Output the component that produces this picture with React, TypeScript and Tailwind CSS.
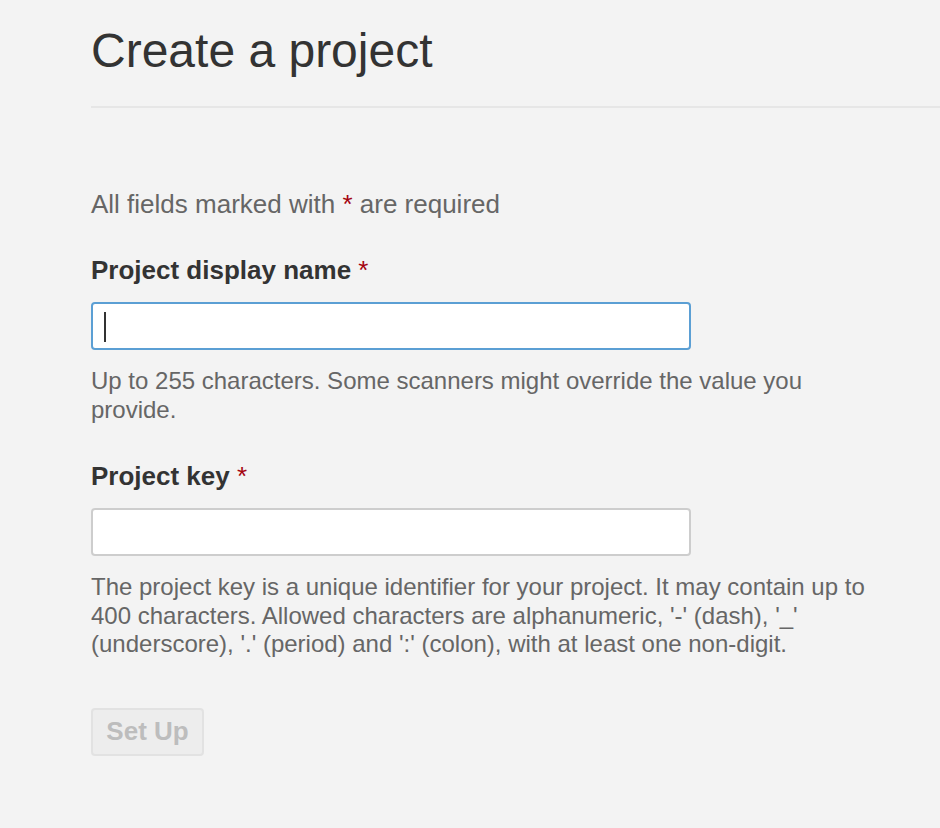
import React from "react";

const font = { fontFamily: '"Liberation Sans", Arial, Helvetica, sans-serif' };

function Req() {
  return <span className="text-[#a4030f] font-normal">*</span>;
}

export default function App() {
  return (
    <div
      className="min-h-[828px] w-full bg-[#f3f3f3] pt-[21px] text-[#333]"
      style={font}
    >
      <div className="pl-[91px]">
        <h1 className="text-[48px] leading-[60px] font-normal text-[#333]">
          Create a project
        </h1>
        <div className="mt-[25px] h-[2px] bg-[#e6e6e6]" />

        <div className="w-[790px]">
          <p className="mt-[81px] text-[26px] leading-[30px] text-[#666]">
            All fields marked with <Req /> are required
          </p>

          <label className="mt-[36px] block text-[26px] leading-[30px] font-bold text-[#333]">
            Project display name <Req />
          </label>
          <div className="relative mt-[17px] w-[600px]">
            <input
              type="text"
              className="block h-[48px] w-[600px] rounded-[4px] border-2 border-[#5b9fd4] bg-white px-[12px] text-[26px] outline-none"
            />
            <span className="absolute left-[13px] top-[10px] h-[30px] w-[2px] bg-[#333]" />
          </div>
          <p className="mt-[17px] text-[24px] leading-[28.5px] text-[#666]">
            Up to 255 characters. Some scanners might override the value you
            provide.
          </p>

          <label className="mt-[37px] block text-[26px] leading-[30px] font-bold text-[#333]">
            Project key <Req />
          </label>
          <input
            type="text"
            className="mt-[17px] block h-[48px] w-[600px] rounded-[4px] border-2 border-[#cdcdcd] bg-white px-[12px] text-[26px] outline-none"
          />
          <p className="mt-[17px] text-[24px] leading-[28.5px] text-[#666]">
            The project key is a unique identifier for your project. It may
            contain up to 400 characters. Allowed characters are alphanumeric,
            '-' (dash), '_' (underscore), '.' (period) and ':' (colon), with at
            least one non-digit.
          </p>

          <button
            disabled
            className="mt-[49px] flex h-[48px] w-[113px] items-center justify-center rounded-[4px] border-2 border-[#e2e2e2] bg-[#ededed] text-[26px] font-bold text-[#bdbdbd]"
          >
            Set Up
          </button>
        </div>
      </div>
    </div>
  );
}
